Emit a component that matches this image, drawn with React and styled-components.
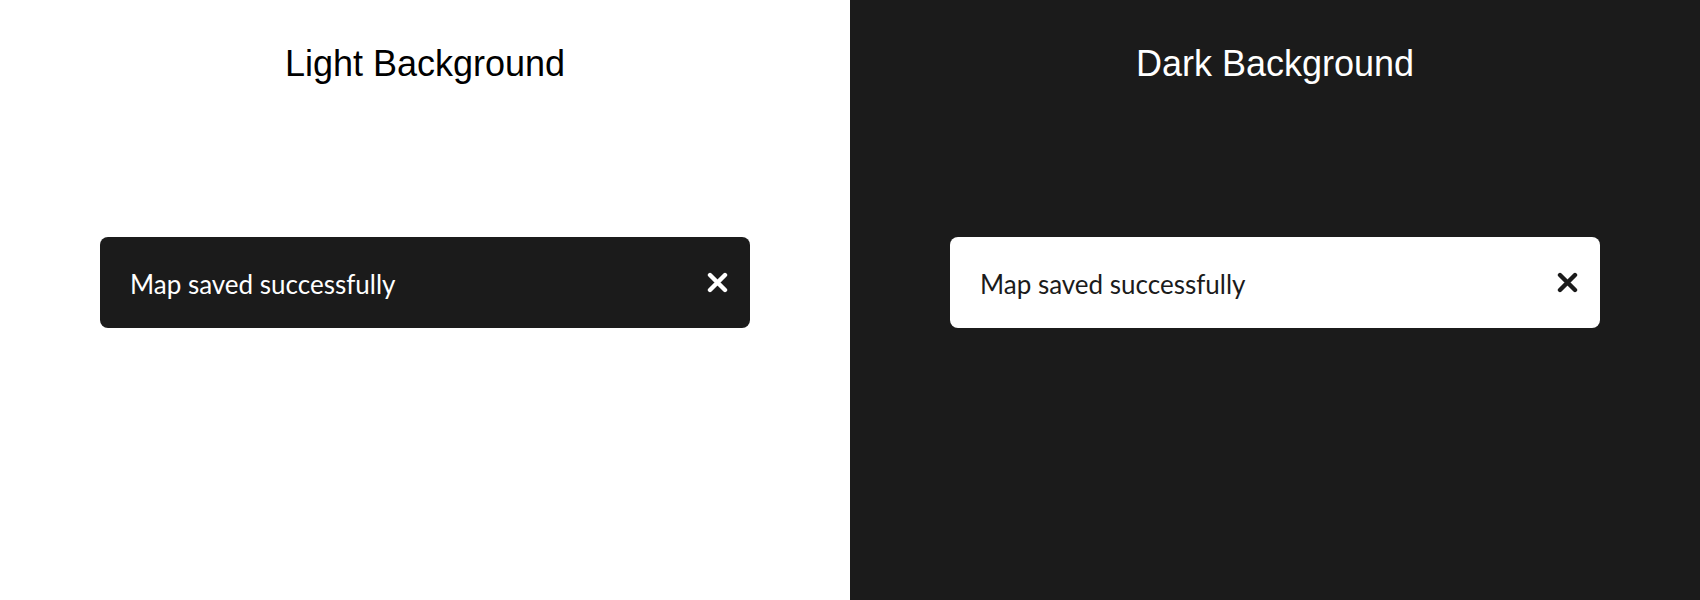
import styled, { createGlobalStyle } from 'styled-components'

const GlobalStyle = createGlobalStyle`
	html, body {
		margin: 0;
		padding: 0;
		background: #ffffff;
	}
	* {
		box-sizing: border-box;
	}
`

const Page = styled.div`
	display: grid;
	grid-template-columns: 850px 850px;
	width: 1700px;
	height: 600px;
`

const Panel = styled.section`
	display: flex;
	flex-direction: column;
	align-items: center;
	padding-top: 43px;
	background-color: ${({ $dark }) => ($dark ? '#1b1b1b' : '#ffffff')};
`

const Title = styled.h2`
	margin: 0 0 153px;
	font-family: 'Liberation Sans', Arial, sans-serif;
	font-weight: 400;
	font-size: 36px;
	line-height: 41px;
	color: ${({ $dark }) => ($dark ? '#ffffff' : '#000000')};
`

const Toast = styled.div`
	display: flex;
	align-items: center;
	justify-content: space-between;
	width: 650px;
	height: 91px;
	padding: 0 22px 0 30px;
	border-radius: 8px;
	background-color: ${({ $inverse }) => ($inverse ? '#ffffff' : '#1b1b1b')};
	color: ${({ $inverse }) => ($inverse ? '#1b1b1b' : '#ffffff')};
`

const Message = styled.span`
	font-family: Lato, 'Open Sans', sans-serif;
	font-size: 26px;
	line-height: 30px;
	margin-top: 2px;
`

const CloseButton = styled.button`
	display: flex;
	align-items: center;
	justify-content: center;
	width: 21px;
	height: 21px;
	padding: 0;
	border: none;
	background: none;
	color: inherit;
	cursor: pointer;
`

const CloseIcon = () => (
	<svg width="21" height="21" viewBox="0 0 21 21" fill="none">
		<path d="M3 3 L18 18 M18 3 L3 18" stroke="currentColor" strokeWidth="4.4" strokeLinecap="round" />
	</svg>
)

const Section = ({ dark, label }) => (
	<Panel $dark={dark}>
		<Title $dark={dark}>{label}</Title>
		<Toast $inverse={dark}>
			<Message>Map saved successfully</Message>
			<CloseButton aria-label="Close">
				<CloseIcon />
			</CloseButton>
		</Toast>
	</Panel>
)

export default function App() {
	return (
		<>
			<GlobalStyle />
			<Page>
				<Section label="Light Background" />
				<Section dark label="Dark Background" />
			</Page>
		</>
	)
}
